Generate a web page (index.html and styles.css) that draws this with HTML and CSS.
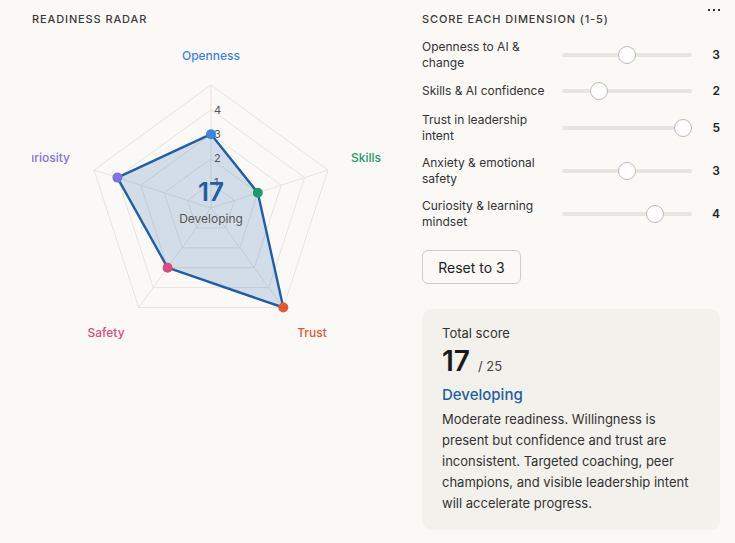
FILE: index.html
```html
<!DOCTYPE html>
<html lang="en">
<head>
    <meta charset="utf-8">
    <title>Readiness Radar</title>
    <link rel="stylesheet" href="styles.css">
</head>
<body>
    <main class="layout">
        <section class="radar-panel">
            <h2 class="panel-title">Readiness radar</h2>
            <svg class="radar" width="360" height="330" viewBox="32 30 360 330">
                <!-- grid rings, levels 1-5 -->
                <g class="grid">
                    <polygon points="211,183.4 234.4,200.4 225.5,227.9 196.5,227.9 187.6,200.4"/>
                    <polygon points="211,158.8 257.8,192.8 239.9,247.8 182.1,247.8 164.2,192.8"/>
                    <polygon points="211,134.2 281.2,185.2 254.4,267.7 167.6,267.7 140.8,185.2"/>
                    <polygon points="211,109.6 304.6,177.6 268.8,287.6 153.2,287.6 117.4,177.6"/>
                    <polygon points="211,85 328,170 283.3,307.5 138.7,307.5 94,170"/>
                    <line x1="211" y1="208" x2="211" y2="85"/>
                    <line x1="211" y1="208" x2="328" y2="170"/>
                    <line x1="211" y1="208" x2="283.3" y2="307.5"/>
                    <line x1="211" y1="208" x2="138.7" y2="307.5"/>
                    <line x1="211" y1="208" x2="94" y2="170"/>
                </g>
                <g class="ticks">
                    <text x="214" y="114">4</text>
                    <text x="214" y="138">3</text>
                    <text x="214" y="162">2</text>
                    <text x="214" y="186">1</text>
                </g>
                <polygon class="shape" points="211,134.2 257.8,192.8 283.3,307.5 167.6,267.7 117.4,177.6"/>
                <circle class="dot dot-open" cx="211" cy="134.2" r="5"/>
                <circle class="dot dot-skills" cx="257.8" cy="192.8" r="5"/>
                <circle class="dot dot-trust" cx="283.3" cy="307.5" r="5"/>
                <circle class="dot dot-safety" cx="167.6" cy="267.7" r="5"/>
                <circle class="dot dot-curious" cx="117.4" cy="177.6" r="5"/>

                <text class="axis axis-open" x="211" y="60">Openness</text>
                <text class="axis axis-skills" x="366" y="162">Skills</text>
                <text class="axis axis-trust" x="312" y="337">Trust</text>
                <text class="axis axis-safety" x="106" y="337">Safety</text>
                <text class="axis axis-curious" x="70" y="162">Curiosity</text>

                <text class="center-score" x="211" y="201">17</text>
                <text class="center-label" x="211" y="223">Developing</text>
            </svg>
        </section>

        <section class="score-panel">
            <div class="more"><span></span><span></span><span></span></div>
            <h2 class="panel-title">Score each dimension (1-5)</h2>

            <div class="rows">
                <div class="row">
                    <label for="openness">Openness to AI &amp; change</label>
                    <input type="range" id="openness" min="1" max="5" value="3">
                    <span class="val">3</span>
                </div>
                <div class="row">
                    <label for="skills">Skills &amp; AI confidence</label>
                    <input type="range" id="skills" min="1" max="5" value="2">
                    <span class="val">2</span>
                </div>
                <div class="row">
                    <label for="trust">Trust in leadership intent</label>
                    <input type="range" id="trust" min="1" max="5" value="5">
                    <span class="val">5</span>
                </div>
                <div class="row">
                    <label for="safety">Anxiety &amp; emotional safety</label>
                    <input type="range" id="safety" min="1" max="5" value="3">
                    <span class="val">3</span>
                </div>
                <div class="row">
                    <label for="curiosity">Curiosity &amp; learning mindset</label>
                    <input type="range" id="curiosity" min="1" max="5" value="4">
                    <span class="val">4</span>
                </div>
            </div>

            <button type="button" class="reset">Reset to 3</button>

            <div class="card">
                <div class="card-label">Total score</div>
                <div class="total"><span class="total-num">17</span><span class="total-max">/ 25</span></div>
                <div class="band">Developing</div>
                <p class="band-text">Moderate readiness. Willingness is present but confidence and trust are inconsistent. Targeted coaching, peer champions, and visible leadership intent will accelerate progress.</p>
            </div>
        </section>
    </main>
</body>
</html>
```

FILE: styles.css
```css
html {
    background: #faf9f6;
}

body {
    margin: 0;
    color: #2b2b2b;
    font-family: Inter, "Noto Sans", sans-serif;
    font-size: 12px;
}

.layout {
    display: grid;
    grid-template-columns: 360px 298px;
    column-gap: 30px;
    padding: 12px 15px 0 32px;
}

.panel-title {
    margin: 0;
    font-size: 11px;
    line-height: 14px;
    font-weight: 500;
    letter-spacing: 0.08em;
    text-transform: uppercase;
    color: #3a3a3a;
}

/* radar */
.radar {
    display: block;
    margin-top: 4px;
    overflow: hidden;
}

.grid polygon,
.grid line {
    fill: none;
    stroke: #e6e4df;
    stroke-width: 1;
}

.ticks text {
    font-size: 11px;
    fill: #555;
}

.shape {
    fill: #1f5fa8;
    fill-opacity: 0.18;
    stroke: #1f5fa8;
    stroke-width: 2.4;
    stroke-linejoin: round;
}

.dot-open { fill: #3b86e3; }
.dot-skills { fill: #1c9a6e; }
.dot-trust { fill: #e2592c; }
.dot-safety { fill: #d94c7c; }
.dot-curious { fill: #8072e0; }

.axis {
    font-size: 12px;
    font-weight: 500;
    text-anchor: middle;
}

.axis-open { fill: #3b86e3; }
.axis-skills { fill: #1c9a6e; }
.axis-trust { fill: #e2592c; }
.axis-safety { fill: #d94c7c; }
.axis-curious { fill: #8072e0; text-anchor: end; }

.center-score {
    font-size: 26px;
    font-weight: 600;
    fill: #1f5fa8;
    text-anchor: middle;
}

.center-label {
    font-size: 12px;
    fill: #555;
    text-anchor: middle;
}

/* scoring */
.score-panel {
    position: relative;
}

.more {
    position: absolute;
    top: -3px;
    right: 0;
    display: flex;
    gap: 3px;
}

.more span {
    width: 2px;
    height: 2px;
    background: #333;
}

.rows {
    display: grid;
    row-gap: 12px;
    margin-top: 13px;
}

.row {
    display: grid;
    grid-template-columns: 128px 130px 1fr;
    column-gap: 12px;
    align-items: center;
    line-height: 15.5px;
}

.row label {
    color: #333;
}

.val {
    text-align: right;
    font-weight: 600;
    color: #222;
}

input[type=range] {
    -webkit-appearance: none;
    appearance: none;
    width: 130px;
    height: 18px;
    margin: 0;
    background: transparent;
}

input[type=range]::-webkit-slider-runnable-track {
    height: 4px;
    border-radius: 2px;
    background: #e7e5e0;
}

input[type=range]::-webkit-slider-thumb {
    -webkit-appearance: none;
    width: 18px;
    height: 18px;
    margin-top: -7px;
    border-radius: 50%;
    background: #fff;
    border: 1px solid #bdbbb6;
    box-sizing: border-box;
}

.reset {
    display: block;
    margin-top: 21px;
    width: 99px;
    height: 34px;
    padding: 0;
    font-family: inherit;
    font-size: 14px;
    color: #222;
    background: #faf9f6;
    border: 1px solid #cfcdc8;
    border-radius: 6px;
}

.card {
    margin-top: 25px;
    padding: 15px 20px 16px;
    background: #f2f1eb;
    border-radius: 10px;
}

.card-label {
    font-size: 13px;
    line-height: 18px;
    color: #333;
}

.total {
    display: flex;
    align-items: baseline;
    gap: 8px;
    margin-top: 2px;
    line-height: 34px;
}

.total-num {
    font-size: 28px;
    font-weight: 600;
    color: #1a1a1a;
}

.total-max {
    font-size: 13px;
    color: #444;
}

.band {
    margin-top: 1px;
    font-size: 15px;
    line-height: 22px;
    font-weight: 500;
    color: #1f5fa8;
}

.band-text {
    margin: 3px 0 0;
    font-size: 13px;
    line-height: 21px;
    color: #333;
}
```
